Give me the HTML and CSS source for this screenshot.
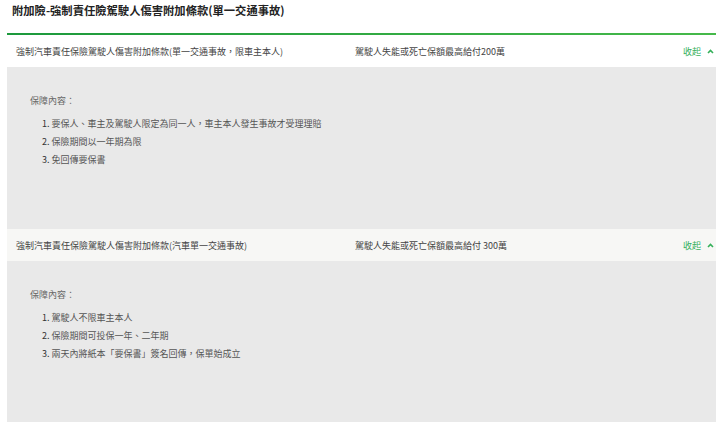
FILE: index.html
```html
<!DOCTYPE html>
<html lang="zh-Hant">
<head>
    <meta charset="UTF-8">
    <meta name="viewport" content="width=device-width, initial-scale=1.0">
    <title>附加險-強制責任險駕駛人傷害附加條款</title>
    <link rel="stylesheet" href="styles.css">
</head>
<body>
    <div class="page">
        <h2 class="section-title">附加險-強制責任險駕駛人傷害附加條款(單一交通事故)</h2>

        <div class="plans">
            <div class="plan">
                <div class="plan-head">
                    <span class="plan-name">強制汽車責任保險駕駛人傷害附加條款(單一交通事故，限車主本人)</span>
                    <span class="plan-amount">駕駛人失能或死亡保額最高給付200萬</span>
                    <a class="toggle" href="#">收起
                        <svg width="7" height="5" viewBox="0 0 7 5"><polyline points="1,4 3.5,1.5 6,4" fill="none" stroke="currentColor" stroke-width="1.6"/></svg>
                    </a>
                </div>
                <div class="plan-body">
                    <p class="body-label">保障內容：</p>
                    <ol>
                        <li>要保人、車主及駕駛人限定為同一人，車主本人發生事故才受理理賠</li>
                        <li>保險期間以一年期為限</li>
                        <li>免回傳要保書</li>
                    </ol>
                </div>
            </div>

            <div class="plan alt">
                <div class="plan-head">
                    <span class="plan-name">強制汽車責任保險駕駛人傷害附加條款(汽車單一交通事故)</span>
                    <span class="plan-amount">駕駛人失能或死亡保額最高給付 300萬</span>
                    <a class="toggle" href="#">收起
                        <svg width="7" height="5" viewBox="0 0 7 5"><polyline points="1,4 3.5,1.5 6,4" fill="none" stroke="currentColor" stroke-width="1.6"/></svg>
                    </a>
                </div>
                <div class="plan-body last">
                    <p class="body-label">保障內容：</p>
                    <ol>
                        <li>駕駛人不限車主本人</li>
                        <li>保險期間可投保一年、二年期</li>
                        <li>兩天內將紙本「要保書」簽名回傳，保單始成立</li>
                    </ol>
                </div>
            </div>
        </div>
    </div>
</body>
</html>
```

FILE: styles.css
```css
body {
    margin: 0;
    padding: 0;
    background: #fff;
    color: #333;
    font-family: "Noto Sans CJK TC", "Noto Sans", sans-serif;
}

.page {
    padding: 0 4px 0 7px;
}

/* Title */
.section-title {
    margin: 0 0 13px;
    padding-left: 5px;
    font-size: 11.3px;
    line-height: 20px;
    font-weight: 700;
    color: #222;
}

.plans {
    border-top: 2px solid #2aa347;
    border-image: linear-gradient(to right, #1c993c, #46b94a) 1;
}

/* Plan header row */
.plan-head {
    display: grid;
    grid-template-columns: 339px 1fr auto;
    align-items: center;
    height: 32px;
    padding: 0 2px 0 9px;
    background: #fff;
    font-size: 9px;
    color: #444;
}

.alt .plan-head {
    background: #f7f7f5;
}

.toggle {
    display: flex;
    align-items: center;
    gap: 6px;
    color: #35b05a;
    text-decoration: none;
    font-size: 9px;
}

.toggle svg {
    display: block;
}

/* Plan body */
.plan-body {
    height: 162px;
    box-sizing: border-box;
    padding: 25px 0 0 23px;
    background: #e9e9e9;
    font-size: 9px;
    line-height: 18px;
    color: #555;
}

.plan-body.last {
    height: 161px;
}

.body-label {
    margin: 0 0 5px;
    color: #666;
}

.plan-body ol {
    margin: 0;
    padding-left: 12px;
    list-style-position: inside;
}

.plan-body li::marker {
    color: #333;
}
```
